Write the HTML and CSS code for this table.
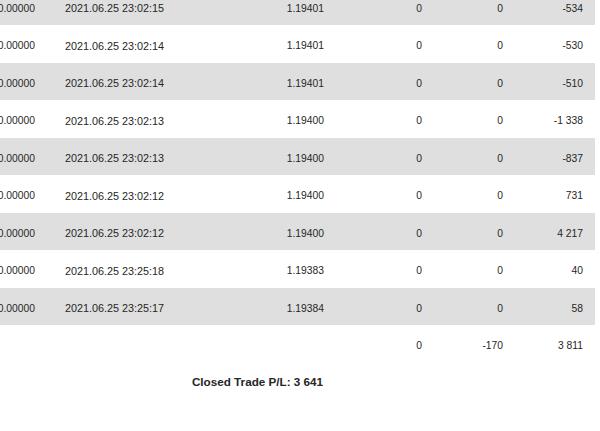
FILE: index.html
```html
<!DOCTYPE html>
<html lang="en">
<head>
  <meta charset="UTF-8" />
  <title>Closed Trades</title>
  <link rel="stylesheet" href="styles.css">
</head>
<body>
  <div class="report">
    <table class="trades">
      <colgroup>
        <col class="c-price-open"><col class="c-time"><col class="c-price"><col class="c-comm"><col class="c-swap"><col class="c-profit">
      </colgroup>
      <tbody>
        <tr class="alt"><td class="num">0.00000</td><td class="time">2021.06.25 23:02:15</td><td class="num">1.19401</td><td class="num">0</td><td class="num">0</td><td class="num">-534</td></tr>
        <tr><td class="num">0.00000</td><td class="time">2021.06.25 23:02:14</td><td class="num">1.19401</td><td class="num">0</td><td class="num">0</td><td class="num">-530</td></tr>
        <tr class="alt"><td class="num">0.00000</td><td class="time">2021.06.25 23:02:14</td><td class="num">1.19401</td><td class="num">0</td><td class="num">0</td><td class="num">-510</td></tr>
        <tr><td class="num">0.00000</td><td class="time">2021.06.25 23:02:13</td><td class="num">1.19400</td><td class="num">0</td><td class="num">0</td><td class="num">-1 338</td></tr>
        <tr class="alt"><td class="num">0.00000</td><td class="time">2021.06.25 23:02:13</td><td class="num">1.19400</td><td class="num">0</td><td class="num">0</td><td class="num">-837</td></tr>
        <tr><td class="num">0.00000</td><td class="time">2021.06.25 23:02:12</td><td class="num">1.19400</td><td class="num">0</td><td class="num">0</td><td class="num">731</td></tr>
        <tr class="alt"><td class="num">0.00000</td><td class="time">2021.06.25 23:02:12</td><td class="num">1.19400</td><td class="num">0</td><td class="num">0</td><td class="num">4 217</td></tr>
        <tr><td class="num">0.00000</td><td class="time">2021.06.25 23:25:18</td><td class="num">1.19383</td><td class="num">0</td><td class="num">0</td><td class="num">40</td></tr>
        <tr class="alt"><td class="num">0.00000</td><td class="time">2021.06.25 23:25:17</td><td class="num">1.19384</td><td class="num">0</td><td class="num">0</td><td class="num">58</td></tr>
        <tr class="total"><td></td><td></td><td></td><td class="num">0</td><td class="num">-170</td><td class="num">3 811</td></tr>
      </tbody>
    </table>
    <div class="summary">Closed Trade P/L: 3 641</div>
  </div>
</body>
</html>
```

FILE: styles.css
```css
body { margin: 0; padding: 0; background: white; color: #262626; font-family: "Liberation Sans", Arial, sans-serif; }
.report { width: 675px; margin: -12.5px 0 0 -80px; }
.trades { width: 100%; border-collapse: collapse; table-layout: fixed; font-size: 10.3px; }
.c-price-open { width: 133px; }
.c-time { width: 147px; }
.c-price { width: 136px; }
.c-comm { width: 98px; }
.c-swap { width: 81px; }
.c-profit { width: 80px; }
.trades tr { height: 37.5px; }
.trades td { padding: 4px 12px 0; vertical-align: middle; white-space: nowrap; }
.trades td:first-child { padding-right: 18px; }
.trades tr.alt td { background: #dfdfdf; }
.num { text-align: right; }
.time { text-align: left; font-size: 10.8px; }
.summary { text-align: center; font-weight: bold; font-size: 11.7px; line-height: 14px; padding-top: 12px; }
```
